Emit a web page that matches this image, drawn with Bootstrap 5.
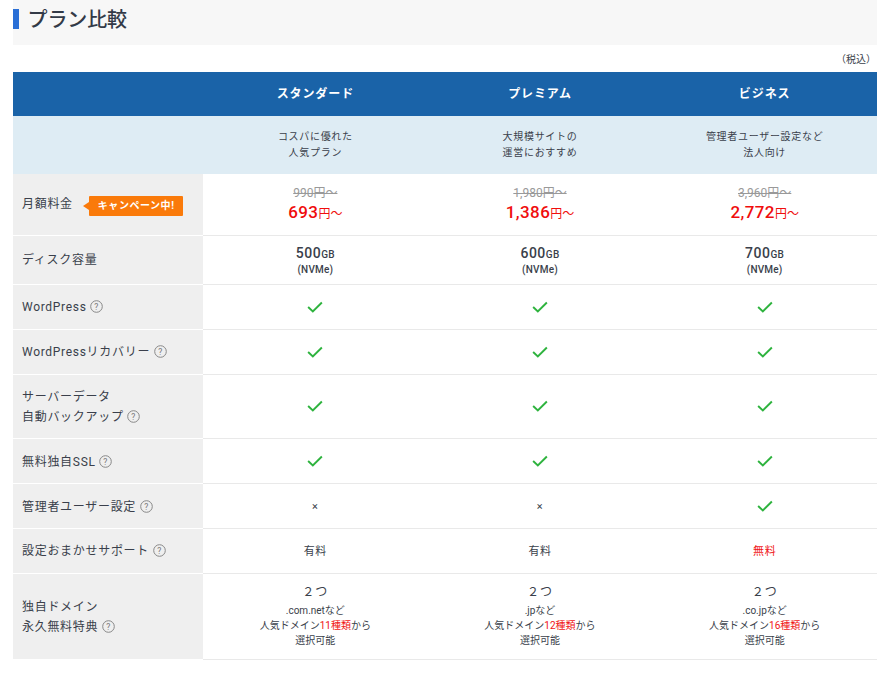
<!DOCTYPE html>
<html lang="ja">
<head>
<meta charset="utf-8">
<title>プラン比較</title>
<link href="https://cdn.jsdelivr.net/npm/bootstrap@5.3.0/dist/css/bootstrap.min.css" rel="stylesheet">
<style>
html,body{background:#fff}
body{font-family:Roboto,"Noto Sans CJK JP",sans-serif;color:#3a3f4b;font-size:12px;overflow:hidden}
.pg{padding:0 8px 0 13px}
.ttl{background:#f7f7f7;height:45px;padding:9px 0 0 0;margin:0}
.ttl h2{border-left:6px solid #2a6fd6;margin:0;height:20px;line-height:22px;padding-left:8.5px;font-size:20px;font-weight:500;color:#333a47;letter-spacing:-.1px}
.tax{font-size:10px;text-align:right;height:27px;padding:9px 1px 0 0;line-height:12px;color:#3a3f4b}
.cmp{table-layout:fixed;width:864px;margin:0;border-collapse:separate;border-spacing:0}
.cmp>tbody>tr>*{padding:0;vertical-align:middle;text-align:center;border:0;border-bottom:1px solid #e9e9e9;font-weight:400;color:#3a3f4b;background:#fff;box-shadow:none}
.cmp>tbody>tr>th.lbl{text-align:left;background:#efefef;border-bottom:1px solid #fff;padding-left:9px;font-size:12px;letter-spacing:.7px;line-height:20px}
.cmp .c0{width:190px}
.cmp>tbody>tr.hd>*{background:#1a63a8;color:#fff;font-weight:700;font-size:12px;letter-spacing:.9px;height:44px;border:0}
.cmp>tbody>tr.sb>*{background:#deecf4;height:58px;font-size:10px;line-height:16px;border:0;letter-spacing:.7px}
.r1>*{height:62px}.r2>*{height:49px}.r3>*{height:45px}.r4>*{height:64px}.r5>*{height:86px}
.cmp>tbody>tr.r4>th.lbl,.cmp>tbody>tr.r5>th.lbl{padding-top:1px}
.cmp>tbody>tr>th.lbl.dn{padding-top:2px}
.camp{position:relative;display:inline-block;background:#fa7a0a;color:#fff;font-size:10px;font-weight:700;line-height:19px;height:20px;padding:0 9px;border-radius:1px;margin-left:16px;letter-spacing:.55px;vertical-align:middle;top:1px}
.camp::before{content:"";position:absolute;left:-6px;top:6px;border:4px solid transparent;border-left:0;border-right:6px solid #fa7a0a}
.old{display:block;font-size:12px;line-height:16px;color:#999;text-decoration:line-through}
.pr{display:block;font-size:17px;font-weight:500;line-height:22px;color:#f00d0d;letter-spacing:.4px}
.pr small{font-size:12px;font-weight:400;letter-spacing:0}
.dk{display:block;font-size:14px;font-weight:500;line-height:18px;letter-spacing:.5px}
.dk small{font-size:10px;letter-spacing:.3px}
.nv{display:block;font-size:10px;font-weight:500;line-height:13px;letter-spacing:.2px;margin:-1px 0 1px}
.cmp>tbody>tr>td.tx{font-size:11px;letter-spacing:.6px;padding-top:2px}
.red{color:#f01414}
.two{display:block;font-size:12px;line-height:18px;letter-spacing:1px;margin-bottom:2px}
.dm{display:block;font-size:10px;line-height:15px;letter-spacing:0}
.cmp>tbody>tr.r5>td{padding-bottom:3px}
.ck{width:16px;height:12px;vertical-align:middle;margin-bottom:2px}
.qm{width:13px;height:13px;vertical-align:-2px;margin-left:0}
.qm text{font-family:Roboto,sans-serif}
</style>
</head>
<body>
<div class="pg">
<div class="ttl"><h2>プラン比較</h2></div>
<div class="tax">（税込）</div>
<table class="table cmp">
<colgroup><col class="c0"><col><col><col></colgroup>
<tbody>
<tr class="hd"><th></th><th>スタンダード</th><th>プレミアム</th><th>ビジネス</th></tr>
<tr class="sb"><th></th><td>コスパに優れた<br>人気プラン</td><td>大規模サイトの<br>運営におすすめ</td><td>管理者ユーザー設定など<br>法人向け</td></tr>
<tr class="r1"><th class="lbl">月額料金<span class="camp">キャンペーン中!</span></th>
<td><span class="old">990円～</span><span class="pr">693<small>円～</small></span></td>
<td><span class="old">1,980円～</span><span class="pr">1,386<small>円～</small></span></td>
<td><span class="old">3,960円～</span><span class="pr">2,772<small>円～</small></span></td></tr>
<tr class="r2"><th class="lbl">ディスク容量</th>
<td><span class="dk">500<small>GB</small></span><span class="nv">(NVMe)</span></td>
<td><span class="dk">600<small>GB</small></span><span class="nv">(NVMe)</span></td>
<td><span class="dk">700<small>GB</small></span><span class="nv">(NVMe)</span></td></tr>
<tr class="r3"><th class="lbl">WordPress <svg class="qm" viewBox="0 0 13 13"><circle cx="6.5" cy="6.5" r="5.8" fill="none" stroke="#888"/><text x="6.5" y="9.5" font-size="8.5" text-anchor="middle" fill="#777">?</text></svg></th>
<td><svg class="ck" viewBox="0 0 17 12"><path d="M1.2 6l5 4.8L15.8 1.2" fill="none" stroke="#2eb33e" stroke-width="2"/></svg></td>
<td><svg class="ck" viewBox="0 0 17 12"><path d="M1.2 6l5 4.8L15.8 1.2" fill="none" stroke="#2eb33e" stroke-width="2"/></svg></td>
<td><svg class="ck" viewBox="0 0 17 12"><path d="M1.2 6l5 4.8L15.8 1.2" fill="none" stroke="#2eb33e" stroke-width="2"/></svg></td></tr>
<tr class="r3"><th class="lbl">WordPressリカバリー <svg class="qm" viewBox="0 0 13 13"><circle cx="6.5" cy="6.5" r="5.8" fill="none" stroke="#888"/><text x="6.5" y="9.5" font-size="8.5" text-anchor="middle" fill="#777">?</text></svg></th>
<td><svg class="ck" viewBox="0 0 17 12"><path d="M1.2 6l5 4.8L15.8 1.2" fill="none" stroke="#2eb33e" stroke-width="2"/></svg></td>
<td><svg class="ck" viewBox="0 0 17 12"><path d="M1.2 6l5 4.8L15.8 1.2" fill="none" stroke="#2eb33e" stroke-width="2"/></svg></td>
<td><svg class="ck" viewBox="0 0 17 12"><path d="M1.2 6l5 4.8L15.8 1.2" fill="none" stroke="#2eb33e" stroke-width="2"/></svg></td></tr>
<tr class="r4"><th class="lbl">サーバーデータ<br>自動バックアップ <svg class="qm" viewBox="0 0 13 13"><circle cx="6.5" cy="6.5" r="5.8" fill="none" stroke="#888"/><text x="6.5" y="9.5" font-size="8.5" text-anchor="middle" fill="#777">?</text></svg></th>
<td><svg class="ck" viewBox="0 0 17 12"><path d="M1.2 6l5 4.8L15.8 1.2" fill="none" stroke="#2eb33e" stroke-width="2"/></svg></td>
<td><svg class="ck" viewBox="0 0 17 12"><path d="M1.2 6l5 4.8L15.8 1.2" fill="none" stroke="#2eb33e" stroke-width="2"/></svg></td>
<td><svg class="ck" viewBox="0 0 17 12"><path d="M1.2 6l5 4.8L15.8 1.2" fill="none" stroke="#2eb33e" stroke-width="2"/></svg></td></tr>
<tr class="r3"><th class="lbl dn">無料独自SSL <svg class="qm" viewBox="0 0 13 13"><circle cx="6.5" cy="6.5" r="5.8" fill="none" stroke="#888"/><text x="6.5" y="9.5" font-size="8.5" text-anchor="middle" fill="#777">?</text></svg></th>
<td><svg class="ck" viewBox="0 0 17 12"><path d="M1.2 6l5 4.8L15.8 1.2" fill="none" stroke="#2eb33e" stroke-width="2"/></svg></td>
<td><svg class="ck" viewBox="0 0 17 12"><path d="M1.2 6l5 4.8L15.8 1.2" fill="none" stroke="#2eb33e" stroke-width="2"/></svg></td>
<td><svg class="ck" viewBox="0 0 17 12"><path d="M1.2 6l5 4.8L15.8 1.2" fill="none" stroke="#2eb33e" stroke-width="2"/></svg></td></tr>
<tr class="r3"><th class="lbl dn">管理者ユーザー設定 <svg class="qm" viewBox="0 0 13 13"><circle cx="6.5" cy="6.5" r="5.8" fill="none" stroke="#888"/><text x="6.5" y="9.5" font-size="8.5" text-anchor="middle" fill="#777">?</text></svg></th>
<td class="tx">×</td><td class="tx">×</td>
<td><svg class="ck" viewBox="0 0 17 12"><path d="M1.2 6l5 4.8L15.8 1.2" fill="none" stroke="#2eb33e" stroke-width="2"/></svg></td></tr>
<tr class="r3"><th class="lbl">設定おまかせサポート <svg class="qm" viewBox="0 0 13 13"><circle cx="6.5" cy="6.5" r="5.8" fill="none" stroke="#888"/><text x="6.5" y="9.5" font-size="8.5" text-anchor="middle" fill="#777">?</text></svg></th>
<td class="tx">有料</td><td class="tx">有料</td><td class="tx"><span class="red">無料</span></td></tr>
<tr class="r5"><th class="lbl">独自ドメイン<br>永久無料特典 <svg class="qm" viewBox="0 0 13 13"><circle cx="6.5" cy="6.5" r="5.8" fill="none" stroke="#888"/><text x="6.5" y="9.5" font-size="8.5" text-anchor="middle" fill="#777">?</text></svg></th>
<td><span class="two">２つ</span><span class="dm">.com.netなど</span><span class="dm">人気ドメイン<span class="red">11種類</span>から</span><span class="dm">選択可能</span></td>
<td><span class="two">２つ</span><span class="dm">.jpなど</span><span class="dm">人気ドメイン<span class="red">12種類</span>から</span><span class="dm">選択可能</span></td>
<td><span class="two">２つ</span><span class="dm">.co.jpなど</span><span class="dm">人気ドメイン<span class="red">16種類</span>から</span><span class="dm">選択可能</span></td></tr>
</tbody>
</table>
</div>
<script src="https://cdn.jsdelivr.net/npm/bootstrap@5.3.0/dist/js/bootstrap.bundle.min.js"></script>
</body>
</html>
